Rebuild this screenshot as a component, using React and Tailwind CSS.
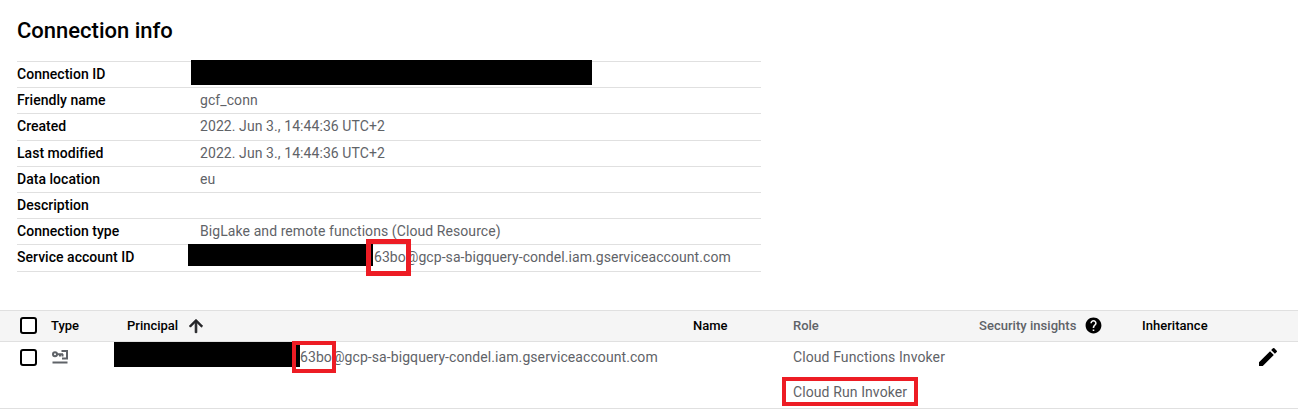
import React from 'react';

const INFO_ROWS = [
  { label: 'Friendly name', value: 'gcf_conn' },
  { label: 'Created', value: '2022. Jun 3., 14:44:36 UTC+2' },
  { label: 'Last modified', value: '2022. Jun 3., 14:44:36 UTC+2' },
  { label: 'Data location', value: 'eu' },
  { label: 'Description', value: '' },
  { label: 'Connection type', value: 'BigLake and remote functions (Cloud Resource)' },
];

const InfoRow = ({ label, children }) => (
  <div className="relative flex h-[26.2px] items-center border-b border-[#e0e0e0]">
    <div className="w-[183px] shrink-0 font-medium tracking-[0.03px] text-black">{label}</div>
    {children}
  </div>
);

const Checkbox = () => (
  <div className="h-[17px] w-[17px] rounded-[3px] border-2 border-black bg-white" />
);

const KeyIcon = () => (
  <svg width="16" height="14" viewBox="0 0 16 14" fill="none" stroke="#5f6368" strokeWidth="2">
    <circle cx="3" cy="4.2" r="2" />
    <path d="M5 4.2h6M8 4v2.6M10.5 4v2.6M9.5 1H15V8.4H10M.5 12.6h15" />
  </svg>
);

const PencilIcon = () => (
  <svg width="24" height="24" viewBox="0 0 24 24" fill="#000">
    <path d="M3 17.25V21h3.75L17.81 9.94l-3.75-3.75L3 17.25zM20.71 7.04a1 1 0 0 0 0-1.41l-2.34-2.34a1 1 0 0 0-1.41 0l-1.83 1.83 3.75 3.75 1.83-1.83z" />
  </svg>
);

const ArrowUpIcon = () => (
  <svg width="20" height="20" viewBox="0 0 24 24" fill="#202124" stroke="#202124" strokeWidth="1">
    <path d="M4 12l1.41 1.41L11 7.83V20h2V7.83l5.58 5.59L20 12l-8-8-8 8z" />
  </svg>
);

const HelpIcon = () => (
  <svg width="19" height="19" viewBox="0 0 24 24" fill="#000">
    <path d="M12 2C6.48 2 2 6.48 2 12s4.48 10 10 10 10-4.48 10-10S17.52 2 12 2zm1 17h-2v-2h2v2zm2.07-7.75l-.9.92C13.45 12.9 13 13.5 13 15h-2v-.5c0-1.1.45-2.1 1.17-2.83l1.24-1.26c.37-.36.59-.86.59-1.41 0-1.1-.9-2-2-2s-2 .9-2 2H8c0-2.21 1.79-4 4-4s4 1.79 4 4c0 .88-.36 1.68-.93 2.25z" />
  </svg>
);

export default function App() {
  return (
    <div className="h-[412px] w-[1298px] overflow-hidden bg-white font-['Roboto',sans-serif] text-[14px] text-[#5f6368]">
      <section className="pl-[17px] pt-[16px]">
        <h1 className="h-[29px] text-[22px] font-medium leading-[29px] text-black">Connection info</h1>
        <div className="mt-[16px] w-[744px] border-t border-[#e0e0e0]">
          <InfoRow label="Connection ID">
            <div className="absolute left-[174px] top-[-2px] h-[25px] w-[401px] bg-black" />
          </InfoRow>
          {INFO_ROWS.map((row) => (
            <InfoRow key={row.label} label={row.label}>
              <span className="tracking-[0.08px]">{row.value}</span>
            </InfoRow>
          ))}
          <InfoRow label="Service account ID">
            <div className="absolute left-[171px] top-[-1px] h-[22px] w-[179px] bg-black" />
            <div className="absolute left-[354px] top-[-1px] h-[22px] w-[2px] bg-black" />
            <span className="ml-[174px] tracking-[0.06px]">63bo@gcp-sa-bigquery-condel.iam.gserviceaccount.com</span>
            <div className="absolute left-[349px] top-[-6px] h-[37px] w-[45px] border-[5px] border-[#ed1c24]" />
          </InfoRow>
        </div>
      </section>

      <section className="mt-[38px] border-t border-[#e0e0e0]">
        <div className="flex h-[31px] items-center border-b border-[#e0e0e0] bg-[#f5f5f5] text-[13px] font-medium">
          <div className="ml-[20px] w-[31px]"><Checkbox /></div>
          <div className="w-[76px] text-black">Type</div>
          <div className="flex w-[566px] items-center gap-[8px] text-black">
            Principal
            <ArrowUpIcon />
          </div>
          <div className="w-[100px] text-black">Name</div>
          <div className="w-[186px]">Role</div>
          <div className="flex w-[163px] items-center gap-[8px] tracking-[0.03px]">
            Security insights
            <HelpIcon />
          </div>
          <div className="text-black tracking-[0.03px]">Inheritance</div>
        </div>
        <div className="flex h-[67px] items-start border-b border-[#e0e0e0]">
          <div className="ml-[20px] mt-[7px] w-[32px]"><Checkbox /></div>
          <div className="mt-[8px] w-[62px]"><KeyIcon /></div>
          <div className="relative flex h-[25px] w-[679px] items-center">
            <div className="h-[25px] w-[178px] bg-black" />
            <div className="ml-[4px] h-[25px] w-[4px] bg-black" />
            <span className="pt-[6px] tracking-[0.08px]">63bo@gcp-sa-bigquery-condel.iam.gserviceaccount.com</span>
            <div className="absolute left-[178px] top-[-1px] h-[32px] w-[44px] border-4 border-[#ed1c24]" />
          </div>
          <div className="mt-[3px] w-[463px] tracking-[0.1px]">
            <div className="h-[25px] leading-[25px]">Cloud Functions Invoker</div>
            <div className="relative mt-[12px] h-[20px] leading-[20px]">
              Cloud Run Invoker
              <div className="absolute left-[-11px] top-[-5px] h-[29px] w-[136px] border-4 border-[#ed1c24]" />
            </div>
          </div>
          <div className="mt-[3px]"><PencilIcon /></div>
        </div>
      </section>
    </div>
  );
}
